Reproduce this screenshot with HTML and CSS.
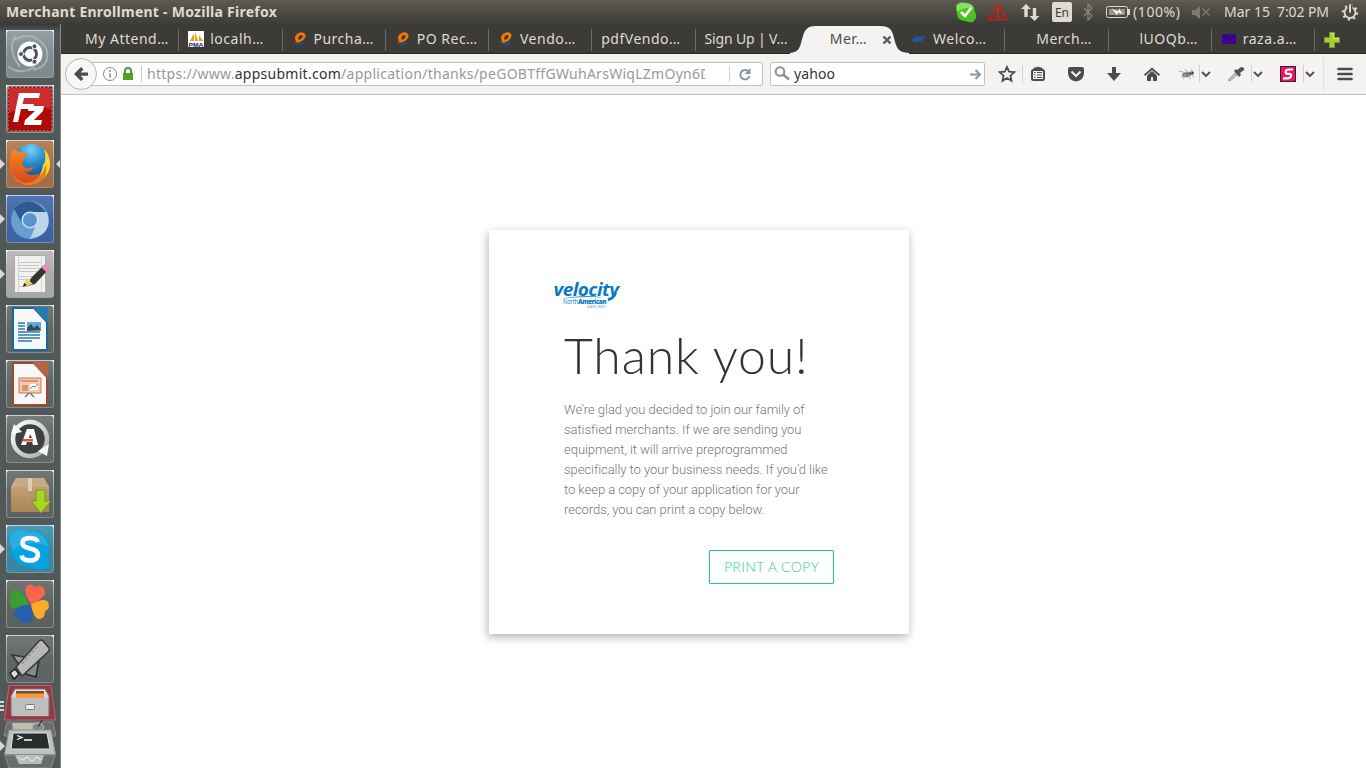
FILE: index.html
```html
<!DOCTYPE html>
<html lang="en">
<head>
<meta charset="utf-8">
<title>Merchant Enrollment</title>
<link rel="stylesheet" href="styles.css">
</head>
<body>
<svg width="0" height="0" class="defs" aria-hidden="true">
  <defs>
    <linearGradient id="ring" x1="0" y1="0" x2="1" y2="1"><stop offset="0" stop-color="#fff"/><stop offset="1" stop-color="#aaa"/></linearGradient>
    <linearGradient id="orange" x1="0" y1="0" x2="0" y2="1"><stop offset="0" stop-color="#f58a1e"/><stop offset="1" stop-color="#d9481c"/></linearGradient>
    <radialGradient id="globe" cx=".5" cy=".15" r=".8"><stop offset="0" stop-color="#79d2f4"/><stop offset=".5" stop-color="#2587c8"/><stop offset="1" stop-color="#0c4286"/></radialGradient>
    <linearGradient id="box" x1="0" y1="0" x2="0" y2="1"><stop offset="0" stop-color="#c9a97e"/><stop offset="1" stop-color="#a88559"/></linearGradient>
    <linearGradient id="metal" x1="0" y1="0" x2="0" y2="1"><stop offset="0" stop-color="#e8e8e8"/><stop offset="1" stop-color="#9f9f9f"/></linearGradient>
    <symbol id="swirl" viewBox="0 0 16 16"><path d="M1 12Q6 12.500 10 10Q14 7 13.500 4Q12 .500 8 1.500Q3 3 3 7Q3 10 5 11Q3 11.500 1 12M9.500 4Q11.500 4.500 10 7Q8 9.500 6.500 8.500Q5.500 7 7 5.200Q8 4 9.500 4" fill="#f57900" fill-rule="evenodd"/><path d="M4 12.500Q9 13 12.500 10Q13.500 12 10.500 14Q6 15.500 4 12.500" fill="#16508a"/></symbol>
    <symbol id="chev" viewBox="0 0 10 8"><path d="M1 2l4 4 4-4" fill="none" stroke="#4c4c4c" stroke-width="1.800"/></symbol>
  </defs>
</svg>
<header class="panel">
  <span class="panel-title">Merchant Enrollment - Mozilla Firefox</span>
  <svg class="tray" width="410" height="24" viewBox="956 0 410 24">
    <path d="M957 4Q961 1 965 3Q974 2 975 12Q978 18 973 22Q969 23 966 21Q956 21 957 12Q954 7 957 4Z" fill="#4bc31f"/><path d="M957 5Q961 2 966 3Q973 4 974 9Q965 6 957 12Z" fill="#86df67"/><path d="M961 12l4 4 6-8" fill="none" stroke="#fff" stroke-width="2.600"/>
    <path d="M998 4L989 19.500H1007Z" fill="none" stroke="#e01616" stroke-width="1.400"/><path d="M998 8v6.500m0 1.500v2" stroke="#f01616" stroke-width="1.800"/>
    <path d="M1026 4l5 5h-3.300v8h-3.400V9H1021zM1034.500 21l5-5h-3.300V8h-3.400v8h-3.300z" fill="#dfdbd2"/>
    <rect x="1052" y="2" width="20" height="20" rx="2" fill="#dfdbd2"/><text x="1055" y="17" class="lang" textLength="14">En</text>
    <path d="M1084 8l8 8-4 4V4l4 4-8 8" fill="none" stroke="#88857e" stroke-width="1.300"/>
    <rect x="1106.500" y="6.500" width="21" height="11" rx="2" fill="none" stroke="#dfdbd2"/><rect x="1109" y="9" width="16" height="6" fill="#99968e"/><path d="M1128 9v6h2V9z" fill="#dfdbd2"/><path d="M1111 8l7 3 1-3 5 7-6-2-1 3z" fill="#fff" stroke="#55524c" stroke-width=".5"/>
    <text x="1133" y="17" class="tray-text" textLength="47">(100%)</text>
    <path d="M1192 10h3l5-4v13l-5-4h-3zM1202 9l1-1 3 3 3-3 1 1-3 3 3 3-1 1-3-3-3 3-1-1 3-3z" fill="#7c7972"/>
    <text x="1224" y="17" class="tray-text" textLength="46">Mar 15</text><text x="1277" y="17" class="tray-text" textLength="52">7:02 PM</text>
    <circle cx="1350" cy="12.500" r="5.500" fill="none" stroke="#dfdbd2" stroke-width="1.800"/><circle cx="1350" cy="12.500" r="7.200" fill="none" stroke="#dfdbd2" stroke-width="2" stroke-dasharray="2.200 3.450"/><path d="M1350 5v7" stroke="#4a4741" stroke-width="5"/><path d="M1350 4.500v8" stroke="#dfdbd2" stroke-width="2"/>
  </svg>
</header>
<div class="desktop">
<aside class="launcher">
  <!-- dash -->
  <svg class="app" viewBox="0 0 61 55"><rect class="tile" x="6.500" y=".5" width="47" height="47" rx="3" fill="#828f94"/><path d="M8 36Q19 46 35 37M15 6Q7 20 20 37M14 10Q34-1 46 18M46 18Q52 36 33 40" fill="none" stroke="#bdc6c8" stroke-width="2" opacity=".6"/><circle cx="30" cy="24" r="12.500" fill="#fff"/><circle cx="30" cy="24" r="6.500" fill="none" stroke="#4f565a" stroke-width="3"/><path d="M30 24L18 24M30 24l6-10.500M30 24l6 10.500" stroke="#fff" stroke-width="1.200"/><circle cx="21" cy="24" r="2.500" fill="#4f565a" stroke="#fff"/><circle cx="34.500" cy="16.300" r="2.500" fill="#4f565a" stroke="#fff"/><circle cx="34.500" cy="31.700" r="2.500" fill="#4f565a" stroke="#fff"/></svg>
  <!-- filezilla -->
  <svg class="app" viewBox="0 0 61 55"><rect class="tile" x="6.500" y=".5" width="47" height="47" rx="3" fill="#7a7f7f"/><rect x="9" y="3" width="42" height="42" fill="#b30808" stroke="#b30808" stroke-width="2.500" stroke-dasharray="2.500 1.500"/><path d="M9 3h42v21Q30 17 9 28z" fill="#e65050" opacity=".5"/><path d="M19 8h21l-1 5H24l-1.500 6H34l-1 5H21l-3 13h-5zM29 21h15l-1 5-9 9h8l-1 5H24l1-5 10-9h-7z" fill="#fff"/></svg>
  <!-- firefox -->
  <svg class="app" viewBox="0 0 61 55"><rect class="tile" x="6.500" y=".5" width="47" height="47" rx="3" fill="#b06c3d"/><circle cx="31" cy="23" r="19" fill="url(#globe)"/><path d="M44 9Q51 16 50 27Q47 40 33 43Q42 35 43 25Q47 21 44 9" fill="#f6d635"/><path d="M11 15Q8 30 17 38Q28 45 37 38Q45 33 45 24Q49 34 41 41Q27 50 15 39Q7 30 11 15" fill="#ed7824"/><path d="M11 14L14 9Q17 12 21 12L28 14L24 18Q21 24 24 27Q28 29 34 27Q30 34 24 31Q30 38 40 33Q36 43 25 43Q9 38 10 22z" fill="url(#orange)"/><path class="arrow" d="M0 19v10l5-5zM61 19v10l-5-5z"/></svg>
  <!-- chromium -->
  <svg class="app" viewBox="0 0 61 55"><rect class="tile" x="6.500" y=".5" width="47" height="47" rx="3" fill="#3560ab"/><circle cx="30" cy="25" r="19" fill="#6b9ed0"/><path d="M14 14Q30-3 46 17H31L22 28z" fill="#2d5b91"/><path d="M31 17h16Q54 39 30 44L37 28z" fill="#bdd5eb"/><circle cx="30" cy="25" r="8.500" fill="#d2e2f1"/><circle cx="30" cy="25" r="7" fill="#5b94ce"/><path class="arrow" d="M0 19v10l5-5z"/></svg>
  <!-- text editor -->
  <svg class="app" viewBox="0 0 61 55"><rect class="tile" x="6.500" y=".5" width="47" height="47" rx="3" fill="#b2b0b1"/><path d="M14.500 5.500h31v37h-31z" fill="#f2f2ef" stroke="#aaa"/><path d="M19 12.500h23M19 15.500h20M19 18.500h24M19 21.500h18M19 26.500h22M19 29.500h16M19 36.500h9" stroke="#c4c6c9"/><path d="M18.500 6v36M41.500 6v36" stroke="#c5d7e8"/><path d="M28 36l3-8 12-12 4 5-12 13z" fill="#34342f"/><path d="M23 37l3-9 7 6z" fill="#ead36b"/><path d="M23 37l1-4 3 2z" fill="#222"/><path d="M41 17l4-3 5 5-4 3z" fill="#e78ac3"/><path class="arrow" d="M0 19v10l5-5z"/></svg>
  <!-- writer -->
  <svg class="app" viewBox="0 0 61 55"><rect class="tile" x="6.500" y=".5" width="47" height="47" rx="3" fill="#5b6161"/><path d="M13 3h21l13 14v28H13z" fill="#f8f8f8" stroke="#1b6898" stroke-width="2"/><path d="M32 2h16v16z" fill="#257daf"/><path d="M18 18h7m-7 3h7m-7 3h7m-7 3h22m-22 3h22m-22 3h22m-22 3h14" stroke="#2a7eae" stroke-width="1.500"/><path d="M27 17h14v9H27z" fill="#5caae0"/><path d="M27 26v-3l4-4 3 4 3-3 4 5z" fill="#344c4c"/></svg>
  <!-- impress -->
  <svg class="app" viewBox="0 0 61 55"><rect class="tile" x="6.500" y=".5" width="47" height="47" rx="3" fill="#5b6161"/><path d="M13 3h21l13 14v28H13z" fill="#f8f8f8" stroke="#9c4a28" stroke-width="2"/><path d="M32 2h16v16z" fill="#b66540"/><path d="M19 18h22v15H19z" fill="#f6cbb2" stroke="#d2724a"/><path d="M21 21h17M22 26h6m-6 2h6m-6 2h6" stroke="#ba5c38"/><path d="M30 24h8v6h-8z" fill="#fff"/><path d="M30 29l3-3 2 1 3-3" fill="none" stroke="#4aa34a"/><path d="M29 33l-4 4m5-4l4 4" stroke="#777" stroke-width="1.500"/></svg>
  <!-- software updater -->
  <svg class="app" viewBox="0 0 61 55"><rect class="tile" x="6.500" y=".5" width="47" height="47" rx="3" fill="#5f6566"/><circle cx="30" cy="24" r="17" fill="#3e4142" stroke="url(#ring)" stroke-width="4.500"/><path d="M11 19l3-10 8 8-5 1zM49 29l-2 12-9-5 5-3z" fill="#f8f8f8"/><path d="M27 14h7l4 16h-5l-1-3h-5l-1 3h-5zm3 5l-1 4h3z" fill="#fff"/><path d="M23 24h10v2.500H23z" fill="#e95420"/></svg>
  <!-- package installer -->
  <svg class="app" viewBox="0 0 61 55"><rect class="tile" x="6.500" y=".5" width="47" height="47" rx="3" fill="#5b6161"/><path d="M16 8h28l5 9v25H11V17z" fill="url(#box)"/><path d="M16 8h28l5 9H11z" fill="#c7ab84"/><path d="M28 8h4v13h-4z" fill="#dfcdb0"/><path d="M36 20h9v11h6L41 43 31 31h5z" fill="#a5d823" stroke="#6f9b18"/></svg>
  <!-- skype -->
  <svg class="app" viewBox="0 0 61 55"><rect class="tile" x="6.500" y=".5" width="47" height="47" rx="3" fill="#3089aa"/><path d="M12 7Q18 2 26 7Q45 3 49 20Q49 25 48 29Q51 39 46 43Q40 47 34 42Q14 43 11 25Q13 21 10 17Q8 11 12 7" fill="#05a4df"/><path d="M11 8Q18 3 26 7Q44 4 48 21Q29 14 12 25Q8 13 11 8" fill="#61c6ed" opacity=".35"/><path d="M37.500 17Q37 13 30 13Q22.500 13 22.500 18Q22.500 22 30 23.500Q38 25 38 30Q37 35.500 30 35.500Q22.500 35.500 21.500 30.500" fill="none" stroke="#fff" stroke-width="4.600"/><path class="arrow" d="M0 19v10l5-5z"/></svg>
  <!-- clover -->
  <svg class="app" viewBox="0 0 61 55"><rect class="tile" x="6.500" y=".5" width="47" height="47" rx="3" fill="#585e5e"/><path d="M31 24Q24 14 26 7Q29 2 35 7Q43 4 45 11Q46 18 31 24" fill="#ff634d"/><path d="M29 25Q22 8 14 10Q9 11 12 17Q7 22 11 27Q16 31 29 25" fill="#3b9e32"/><path d="M30 25Q17 25 15 30Q11 37 18 38Q21 46 30 42Q36 39 30 25" fill="#285fac"/><path d="M31 24Q45 17 48 22Q51 29 45 31Q45 39 39 39Q33 38 31 24" fill="#f9ac28"/></svg>
  <!-- usb creator -->
  <svg class="app" viewBox="0 0 61 55"><rect class="tile" x="6.500" y=".5" width="47" height="47" rx="3" fill="#5b6161"/><path d="M12 20l13 2L20 31z" fill="#999" stroke="#333" stroke-width="1.500"/><path d="M22 38l14 4 3-17z" fill="#888" stroke="#262626" stroke-width="1.500"/><path d="M16 32L39 6q2-2 4 0l6 7q1 2-1 4L22 41z" fill="#b8b8b8" stroke="#393939" stroke-width="1.500"/><path d="M22 29L38 11" stroke="#777" stroke-dasharray="3 2"/><path d="M10 38l5-4 4 5-5 5z" fill="#ddd" stroke="#222" stroke-width="1.500"/></svg>
  <!-- folded stack at the end of the launcher -->
  <svg class="stack" viewBox="0 683 61 85"><path d="M9 685.500h42l4.500 34.500H4.500z" fill="#963746" stroke="#b06a74"/><path d="M15 689h30l4 7v20H11v-20z" fill="url(#metal)" stroke="#777"/><path d="M16 691h28v6H16z" fill="#77502a"/><path d="M16 693.500h28v4.500H16z" fill="#f79a3c"/><path d="M12 698h36v18H12z" fill="#bebebe"/><rect x="25.500" y="704.500" width="9" height="5" rx="1" fill="#eee" stroke="#777"/><path d="M7 722h46l3 14H4z" fill="#686e6e" stroke="#858989"/><path d="M12 723h26v8H13z" fill="#bdbea9"/><ellipse cx="38" cy="727" rx="6" ry="4" fill="#888" stroke="#bbb"/><path d="M38 727l4-7" stroke="#222"/><path d="M9 730h42l4.500 24.500H4.500z" fill="#bcc0c0" stroke="#8b8f8f"/><path d="M13 733h34l3 16H11z" fill="#272c2d" stroke="#e4e4e4"/><path d="M17 735.500l5 2-5 2M24 740h8" fill="none" stroke="#fff" stroke-width="1.300"/><path d="M5 755h50l-4 13H9z" fill="#686e6e" stroke="#8b8f8f"/><path d="M15 755h29l-3 9H19z" fill="#b9bfbc"/><path d="M18 757l5 3 4-3 5 4 5-4 4 3" fill="none" stroke="#eee"/><path class="arrow" d="M0 701h4v2H0zM0 705h4v2H0zM0 709h4v2H0zM0 741v10l5-5z"/></svg>
</aside>
<main class="browser">
  <nav class="tabs">
    <div class="tab"><span class="t">My Attend…</span></div>
    <div class="tab sep"><svg class="fav" viewBox="0 0 16 16"><path d="M0 0h16v16H0z" fill="#fff"/><path d="M2 10L6 2v8zm5 0V1l3 9zm4-6l4 6h-4z" fill="#f29811"/><text x=".5" y="15.500" class="pma" textLength="15" lengthAdjust="spacingAndGlyphs">PMA</text></svg><span class="t">localh…</span></div>
    <div class="tab sep"><svg class="fav"><use href="#swirl"/></svg><span class="t">Purcha…</span></div>
    <div class="tab sep"><svg class="fav"><use href="#swirl"/></svg><span class="t">PO Rec…</span></div>
    <div class="tab sep"><svg class="fav"><use href="#swirl"/></svg><span class="t">Vendo…</span></div>
    <div class="tab sep"><span class="t">pdfVendo…</span></div>
    <div class="tab sep"><span class="t tight">Sign Up | V…</span></div>
    <div class="tab active"><svg class="active-shape" viewBox="0 0 126 30"><path d="M0 29C11 28 10 21 13 12C15 5 18 2 26 2H90C100 2 102 6 104 14C107 26 109 28 119 29V30H0z" fill="#f4f3f2"/><path d="M93.500 12.500l7 7m0-7l-7 7" stroke="#595959" stroke-width="2.400"/></svg><span class="t ind">Mer…</span></div>
    <div class="tab"><svg class="fav" viewBox="0 0 16 16"><path d="M0 9l4-3 11-1-4 5-7 1z" fill="#2953a5"/></svg><span class="t">Welco…</span></div>
    <div class="tab sep"><span class="t ind">Merch…</span></div>
    <div class="tab sep"><span class="t ind">lUOQb…</span></div>
    <div class="tab sep"><svg class="fav" viewBox="0 0 16 16"><path d="M1 3h14v10H1z" fill="#430297"/><path d="M2 4l6 5 6-5" fill="none" stroke="#251046" stroke-width="1.300"/></svg><span class="t">raza.a…</span></div>
    <div class="newtab sep"><svg width="16" height="16" viewBox="0 0 16 16"><path d="M5.500.500h5v5h5v5h-5v5h-5v-5h-5v-5h5z" fill="#a6cf36" stroke="#779b27"/><path d="M6.500 1.500h3v5h5" fill="none" stroke="#d5ee7c"/></svg></div>
  </nav>
  <section class="toolbar">
    <svg class="back" width="32" height="32" viewBox="0 0 32 32"><circle cx="16" cy="16" r="15.500" fill="#f8f7f6" stroke="#b7b5b3"/><path d="M9 16l7-7 2.500 2.500-3 3H23v3.200h-7.500l3 3L16 23z" fill="#4c4c4c"/></svg>
    <div class="url">
      <svg width="49" height="22" viewBox="0 0 49 22"><circle cx="15" cy="11" r="6.500" fill="none" stroke="#898989"/><path d="M15 7v2m0 1.500v4" stroke="#898989" stroke-width="1.500"/><path d="M28 10h10v7H28z" fill="#4c9f2a"/><path d="M30 11V8a3 3 0 0 1 6 0v3" fill="none" stroke="#4c9f2a" stroke-width="2"/><path d="M46.500 3v16" stroke="#cfcfcf"/></svg>
      <span class="address">https://www.<b>appsubmit.com</b>/application/thanks/peGOBTffGWuhArsWiqLZmOyn6D</span>
      <svg class="reload" width="34" height="22" viewBox="0 0 34 22"><path d="M1.500 3v16" stroke="#cfcfcf"/><path d="M20.500 8.500A4.700 4.700 0 1 0 21.500 13" fill="none" stroke="#8796a7" stroke-width="2"/><path d="M22.500 5v6h-6z" fill="#8796a7"/></svg>
    </div>
    <div class="search">
      <svg width="22" height="22" viewBox="0 0 22 22"><circle cx="9" cy="8.500" r="4.300" fill="none" stroke="#8e8e8e" stroke-width="2"/><path d="M12 11.500l6 5" stroke="#8e8e8e" stroke-width="2.500"/></svg>
      <span class="query">yahoo</span>
      <svg width="16" height="22" viewBox="0 0 16 22"><path d="M2 11.500h9M7.500 7l4.500 4.500L7.500 16" fill="none" stroke="#8796a7" stroke-width="2"/></svg>
    </div>
    <svg class="tools" width="371" height="40" viewBox="995 54 371 40">
      <path d="M1007 67l2.100 4.700 5.200.500-3.900 3.500 1.100 5.100-4.500-2.700-4.500 2.700 1.100-5.100-3.900-3.500 5.200-.5z" fill="none" stroke="#4c4c4c" stroke-width="1.800"/>
      <path d="M1022.500 65v18M1199.500 65v18M1251.500 65v18M1303.500 65v18" stroke="#d4d2d0"/><path d="M1323.500 58v32" stroke="#e2e0de"/>
      <rect x="1032" y="70" width="12" height="10" rx="1.500" fill="none" stroke="#4c4c4c" stroke-width="2"/><path d="M1034 69v-1h2q2-2 4 0h2v1" fill="#4c4c4c" stroke="#4c4c4c"/><path d="M1034 72.500h1.500m1.500 0h5m-8 2.500h1.500m1.500 0h5m-8 2.500h1.500m1.500 0h5" stroke="#4c4c4c" stroke-width="1.200"/>
      <path d="M1070 67h12q2 0 2 2v4q0 7-8 8.500Q1068 80 1068 73v-4q0-2 2-2z" fill="#4c4c4c"/><path d="M1071.500 71.500l4.500 4.500 4.500-4.500" fill="none" stroke="#f4f3f2" stroke-width="2"/>
      <path d="M1112 67h4v6h5l-7 8-7-8h5z" fill="#4c4c4c"/>
      <path d="M1144 74.500l8-7 8 7-1 1.500-7-6-7 6z" fill="#4c4c4c"/><path d="M1147 75.500l5-4.500 5 4.500v5.500h-4v-4h-2v4h-4z" fill="#4c4c4c"/>
      <ellipse cx="1187" cy="74.500" rx="5" ry="2.500" transform="rotate(-15 1187 74.500)" fill="#777"/><circle cx="1192" cy="73" r="1.800" fill="#444"/><path d="M1179 71l7 2M1181 77l5-2M1185 69l3 4M1183 79l3-4M1190 79l-1-4M1194 77l-3-3M1192 69l-1 4" stroke="#aaa"/>
      <path d="M1228 80l8-8 2 2-8 7z" fill="#c5c5c5" stroke="#999"/><path d="M1234 71l2-2 1 1 4-3q4 0 3 3l-4 3 1 2-2 2z" fill="#555"/>
      <rect x="1280.500" y="66.500" width="15" height="15" fill="#e8155f" stroke="#3c1b2a"/><path d="M1293 69.500h-4q-3 0-3.300 2.200t2.300 2.200h1.500q2 0 1.500 2.200t-3 2.200h-5" fill="none" stroke="#fff" stroke-width="2.200"/>
      <use href="#chev" x="1201" y="70" width="10" height="8"/><use href="#chev" x="1253" y="70" width="10" height="8"/><use href="#chev" x="1305" y="70" width="10" height="8"/>
      <path d="M1338.500 69h13M1338.500 74h13M1338.500 79h13" stroke="#4c4c4c" stroke-width="2.600" stroke-linecap="round"/>
    </svg>
  </section>
  <section class="page">
    <article class="card">
      <svg class="logo" width="66" height="28" viewBox="0 0 66 28"><path d="M6 18Q30 13 49 16.500Q27 15 6 18" fill="#3a91cc"/><path d="M62 12Q60 18 54 19" fill="none" stroke="#087bc2" stroke-width="2"/><text><tspan x="-.5" y="15" class="velocity" textLength="65" lengthAdjust="spacingAndGlyphs">velocity</tspan><tspan x="9" y="23" class="north" textLength="15" lengthAdjust="spacingAndGlyphs">North</tspan><tspan x="24" y="23" class="north strong" textLength="28" lengthAdjust="spacingAndGlyphs">American</tspan><tspan x="33" y="27" class="bank" textLength="19" lengthAdjust="spacingAndGlyphs">BANCARD</tspan></text></svg>
      <h1>Thank you!</h1>
      <p>We’re glad you decided to join our family of<br>satisfied merchants. If we are sending you<br>equipment, it will arrive preprogrammed<br>specifically to your business needs. If you’d like<br>to keep a copy of your application for your<br>records, you can print a copy below.</p>
      <button class="print">PRINT A COPY</button>
    </article>
  </section>
</main>
</div>
</body>
</html>
```
FILE: styles.css
```css
* { box-sizing: border-box; }
body { margin: 0; width: 1366px; height: 768px; overflow: hidden; background: #fff; font-family: "Noto Sans", "Open Sans", sans-serif; font-size: 14px; }
svg { display: block; flex: none; }
.defs { position: absolute; }
.panel { height: 24px; display: flex; justify-content: space-between; align-items: center; padding-left: 6px; background: linear-gradient(#5f5b50, #4c4a43 50%, #3e3c37); color: #dfdbd2; }
.panel-title { font-weight: 700; font-size: 14px; line-height: 24px; letter-spacing: .26px; white-space: nowrap; }
.tray-text { font-size: 14px; fill: #dfdbd2; }
.lang { font-size: 12px; fill: #3e3c37; }
.desktop { display: flex; height: 744px; }
.launcher { width: 61px; flex: none; padding-top: 6px; overflow: hidden; background: linear-gradient(#343a3a, #515958 8px, #515958); border-right: 1px solid #898a89; }
.app { width: 61px; height: 55px; background: linear-gradient(#fff, #888 50%, #666) 6px 0 / 48px 48px no-repeat; }
.stack { width: 61px; height: 85px; margin-top: -7px; position: relative; }
.tile { fill-opacity: .86; stroke: #fff; stroke-opacity: .25; stroke-width: 1px; }
.arrow { fill: #d8d8d8; }
.browser { flex: 1; min-width: 0; display: flex; flex-direction: column; }
.tabs { height: 30px; padding-left: 14px; display: flex; background: #3c3b37; border-bottom: 1px solid #2b2a27; color: #dfdbd2; }
.tab { width: 103.25px; flex: none; height: 30px; padding-left: 10px; display: flex; align-items: center; position: relative; }
.sep { background: linear-gradient(#6b6963, #6b6963) 0 5px / 1px 22px no-repeat; }
.fav { width: 16px; height: 16px; margin-right: 6px; }
.pma { font: 700 6px "Liberation Sans", sans-serif; fill: #26276b; }
.t { white-space: nowrap; line-height: 30px; position: relative; letter-spacing: .5px; }
.tight { letter-spacing: -.15px; }
.ind { margin-left: 22px; }
.active { color: #4c4c4c; }
.active-shape { position: absolute; left: -8px; top: 0; width: 126px; height: 30px; }
.newtab { padding: 8px 0 0 10px; width: 51px; }
.toolbar { height: 41px; flex: none; display: flex; align-items: center; background: #f4f3f2; border-bottom: 1px solid #c4c2c0; }
.back { margin-left: 4px; position: relative; z-index: 1; }
.url { width: 675px; height: 24px; margin-left: -9px; padding-left: 6px; border: 1px solid #c3c1bf; border-radius: 2px; background: #fff; display: flex; align-items: center; }
.address { width: 558px; margin-left: 3px; overflow: hidden; white-space: nowrap; color: #999; line-height: 22px; letter-spacing: .27px; }
.address b { font-weight: 400; color: #333; }
.reload { margin-left: auto; }
.search { width: 215px; height: 24px; margin-left: 7px; border: 1px solid #c3c1bf; border-radius: 2px; background: #fff; display: flex; align-items: center; color: #333; }
.query { flex: 1; padding-left: 1px; line-height: 22px; letter-spacing: .1px; }
.tools { margin-left: 10px; }
.page { flex: 1; background: #fff; padding: 135px 0 0 428px; }
.card { width: 420px; height: 404px; padding: 51px 75px 0; background: #fff; box-shadow: -1px 3px 9px rgba(0,0,0,.3); display: flex; flex-direction: column; }
.logo { margin-left: -10px; overflow: visible; }
.velocity { font: italic 700 18.500px "Open Sans", sans-serif; letter-spacing: -.55px; fill: #087bc2; }
.north { font: 6.500px "Open Sans", sans-serif; letter-spacing: -.25px; fill: #087bc2; }
.strong { font-weight: 800; letter-spacing: -.5px; }
.bank { font: 4px "Open Sans", sans-serif; fill: #62aadb; }
h1 { margin: 16px 0 0; font: 300 50px/60px Lato, sans-serif; letter-spacing: .8px; color: #333; white-space: nowrap; }
p { margin: 15px 0 0; font: 300 13px/20px Roboto, sans-serif; letter-spacing: -.05px; color: #777; white-space: nowrap; }
.print { align-self: flex-end; margin: 30px 0 0; width: 125px; height: 34px; padding: 0 0 2px; background: #fff; border: 1px solid #1cc98d; border-radius: 1px; color: #2bd39b; font: 300 14px Lato, sans-serif; letter-spacing: .35px; }
```
